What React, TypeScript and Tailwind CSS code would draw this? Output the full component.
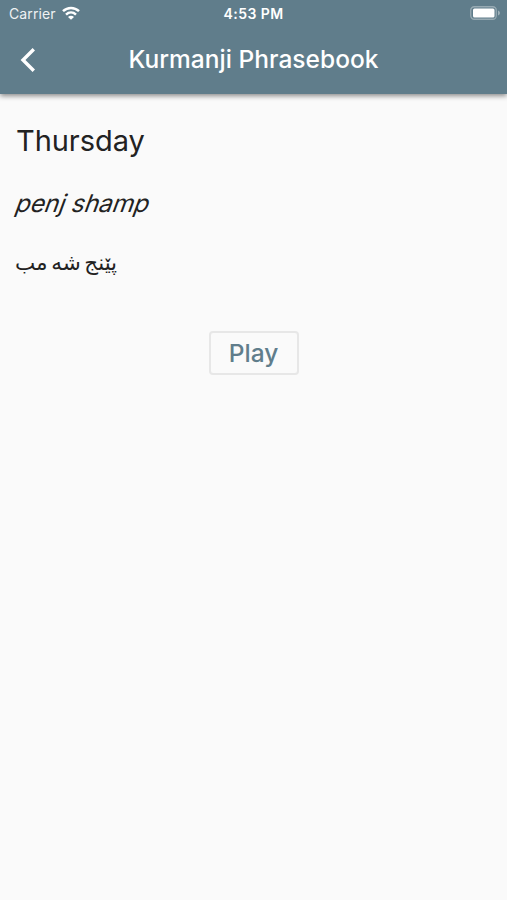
function StatusBar() {
  return (
    <div className="grid h-[27px] grid-cols-3 items-center pl-[9px] pr-[6px] text-[14px] leading-[27px]">
      <div className="flex items-center gap-[6px]">
        <span className="tracking-[0.1px] opacity-90">Carrier</span>
        <svg className="-mt-px" width="18" height="14" viewBox="0 0 18 14" fill="none" stroke="currentColor" strokeWidth="2.5" aria-hidden="true">
          <path d="M1 5.2C5.6.8 12.4.8 17 5.2" />
          <path d="M4 8.6c2.9-2.7 7.1-2.7 10 0" />
          <path d="M9 13.8 6 10.9c1.7-1.6 4.3-1.6 6 0z" fill="currentColor" stroke="none" />
        </svg>
      </div>
      <span className="-ml-[3px] text-center font-semibold tracking-[0.45px] whitespace-nowrap">4:53 PM</span>
      <svg className="-mt-px justify-self-end" width="31" height="14" viewBox="0 0 31 14" aria-hidden="true">
        <rect x="0.75" y="0.75" width="25.5" height="12.5" rx="3.5" fill="none" stroke="white" strokeOpacity="0.35" strokeWidth="1.3" />
        <rect x="3" y="2.5" width="21.5" height="9" rx="1.5" fill="white" />
        <path d="M28 4.5c2.6.8 2.6 4.2 0 5z" fill="white" fillOpacity="0.4" />
      </svg>
    </div>
  );
}

function AppBar() {
  return (
    <div className="grid h-[67px] grid-cols-[56px_1fr_56px] items-center pb-[2px]">
      <button className="flex h-full items-center pl-5" aria-label="Back">
        <svg width="16" height="24" viewBox="0 0 16 24" fill="none" stroke="currentColor" strokeWidth="3.4" aria-hidden="true">
          <path d="M13.8 1.2 3 12l10.8 10.8" />
        </svg>
      </button>
      <h1 className="text-center text-[24.5px] font-medium tracking-[0.03px] whitespace-nowrap">Kurmanji Phrasebook</h1>
    </div>
  );
}

export default function App() {
  return (
    <div className="flex h-screen flex-col overflow-hidden bg-[#fafafa] font-['Inter','DejaVu_Sans',sans-serif] text-[#222]">
      <header className="h-[94px] shrink-0 bg-[#607d8b] text-white shadow-[0_2px_5px_rgba(0,0,0,0.45)]">
        <StatusBar />
        <AppBar />
      </header>
      <main className="flex flex-col items-start px-4 pt-[29px]">
        <p className="text-[29px] leading-9 tracking-[-0.05px]">Thursday</p>
        {/* Slanted upright letterforms instead of the cursive italic cut */}
        <p className="ml-px mt-[28px] -skew-x-[20deg] text-[24.5px] leading-8 tracking-[-0.1px]">penj shamp</p>
        <p className="-ml-px mt-[27px] text-[21.5px] leading-8 [word-spacing:-2.5px]" dir="rtl" lang="ku">پێنج شه مب</p>
        <button className="mt-[53px] h-11 w-[90px] self-center rounded border-2 border-[#e7e7e7] text-[24.5px] font-medium text-[#607d8b]">
          Play
        </button>
      </main>
    </div>
  );
}
